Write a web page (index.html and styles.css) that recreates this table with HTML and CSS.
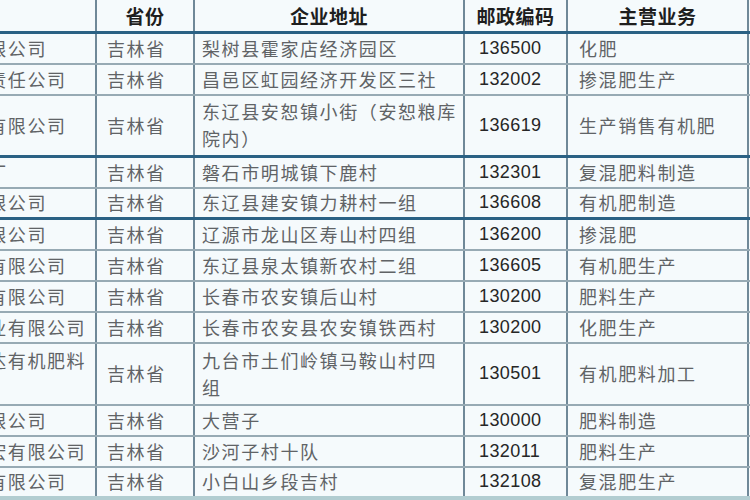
FILE: index.html
```html
<!DOCTYPE html>
<html lang="zh-CN">
<head>
<meta charset="utf-8">
<title>吉林省肥料企业名录</title>
<link rel="stylesheet" href="styles.css">
</head>
<body>
<div class="page">
  <div class="sheet">
    <table class="list">
      <colgroup>
        <col class="c-name"><col class="c-prov"><col class="c-addr"><col class="c-zip"><col class="c-biz"><col class="c-more">
      </colgroup>
      <thead>
        <tr class="head">
          <th></th><th>省份</th><th>企业地址</th><th>邮政编码</th><th>主营业务</th><th></th>
        </tr>
      </thead>
      <tbody>
        <tr><td class="name">梨树丰源化肥有限公司</td><td class="prov">吉林省</td><td class="addr">梨树县霍家店经济园区</td><td class="zip">136500</td><td class="biz">化肥</td><td></td></tr>
        <tr><td class="name">昌邑区肥业有限责任公司</td><td class="prov">吉林省</td><td class="addr">昌邑区虹园经济开发区三社</td><td class="zip">132002</td><td class="biz">掺混肥生产</td><td></td></tr>
        <tr class="tall thick"><td class="name">东辽县安恕生物有限公司</td><td class="prov">吉林省</td><td class="addr">东辽县安恕镇小街（安恕粮库<br>院内）</td><td class="zip">136619</td><td class="biz">生产销售有机肥</td><td></td></tr>
        <tr><td class="name">磐石市明城化肥厂</td><td class="prov">吉林省</td><td class="addr">磐石市明城镇下鹿村</td><td class="zip">132301</td><td class="biz">复混肥料制造</td><td></td></tr>
        <tr class="thick"><td class="name">东辽建安肥业有限公司</td><td class="prov">吉林省</td><td class="addr">东辽县建安镇力耕村一组</td><td class="zip">136608</td><td class="biz">有机肥制造</td><td></td></tr>
        <tr><td class="name">辽源龙山肥业有限公司</td><td class="prov">吉林省</td><td class="addr">辽源市龙山区寿山村四组</td><td class="zip">136200</td><td class="biz">掺混肥</td><td></td></tr>
        <tr><td class="name">东辽县泉太肥业有限公司</td><td class="prov">吉林省</td><td class="addr">东辽县泉太镇新农村二组</td><td class="zip">136605</td><td class="biz">有机肥生产</td><td></td></tr>
        <tr><td class="name">长春市农安肥业有限公司</td><td class="prov">吉林省</td><td class="addr">长春市农安镇后山村</td><td class="zip">130200</td><td class="biz">肥料生产</td><td></td></tr>
        <tr><td class="name">长春农安铁西农业有限公司</td><td class="prov">吉林省</td><td class="addr">长春市农安县农安镇铁西村</td><td class="zip">130200</td><td class="biz">化肥生产</td><td></td></tr>
        <tr class="tall"><td class="name">九台市土们岭宏达有机肥料<br>有限公司</td><td class="prov">吉林省</td><td class="addr">九台市土们岭镇马鞍山村四<br>组</td><td class="zip">130501</td><td class="biz">有机肥料加工</td><td></td></tr>
        <tr><td class="name">长春大营肥业有限公司</td><td class="prov">吉林省</td><td class="addr">大营子</td><td class="zip">130000</td><td class="biz">肥料制造</td><td></td></tr>
        <tr><td class="name">德惠市沙河子农宏有限公司</td><td class="prov">吉林省</td><td class="addr">沙河子村十队</td><td class="zip">132011</td><td class="biz">肥料生产</td><td></td></tr>
        <tr class="last"><td class="name">小白山多段肥业有限公司</td><td class="prov">吉林省</td><td class="addr">小白山乡段吉村</td><td class="zip">132108</td><td class="biz">复混肥生产</td><td></td></tr>
      </tbody>
    </table>
  </div>
</div>
</body>
</html>
```

FILE: styles.css
```css
html, body {
  margin: 0;
  padding: 0;
  background: #f5fafc;
}

.page {
  width: 750px;
  height: 500px;
  overflow: hidden;
  background: #f5fafc;
}

.sheet {
  margin-left: -162px;
}

.list {
  border-collapse: collapse;
  table-layout: fixed;
  width: 970px;
  font-family: "Noto Sans CJK SC", "Noto Sans", sans-serif;
  font-size: 18px;
  color: #606366;
}

.c-name { width: 257px; }
.c-prov { width: 98px; }
.c-addr { width: 270px; }
.c-zip  { width: 103px; }
.c-biz  { width: 181px; }
.c-more { width: 61px; }

.list th,
.list td {
  border-left: 2px solid #6f8898;
  border-right: 2px solid #6f8898;
  border-bottom: 2px solid #97aab4;
  padding: 0;
  white-space: nowrap;
  overflow: hidden;
}

.head th {
  height: 31px;
  border-bottom: 3px solid #2a6184;
  font-weight: 700;
  font-size: 19px;
  color: #1e1e1e;
  text-align: center;
  letter-spacing: 0.5px;
  line-height: 30px;
}

.list tbody tr {
  height: 31px;
}

.list tbody tr.tall {
  height: 62px;
}

.list tbody tr.thick td {
  border-bottom: 3px solid #2a6184;
}

.list tbody tr.last td {
  border-bottom: 4px solid #b2cdd1;
}

.list td {
  line-height: 27px;
  letter-spacing: 1.6px;
  vertical-align: middle;
}

.name {
  padding-left: 11px !important;
  text-align: left;
}

.prov {
  padding-left: 10px !important;
}

.addr {
  padding-left: 7px !important;
}

.zip {
  padding-left: 14px !important;
  font-family: "Liberation Sans", Arial, sans-serif;
  font-size: 18px;
  letter-spacing: 0.4px !important;
  color: #262626;
}

.biz {
  padding-left: 11px !important;
}
```
